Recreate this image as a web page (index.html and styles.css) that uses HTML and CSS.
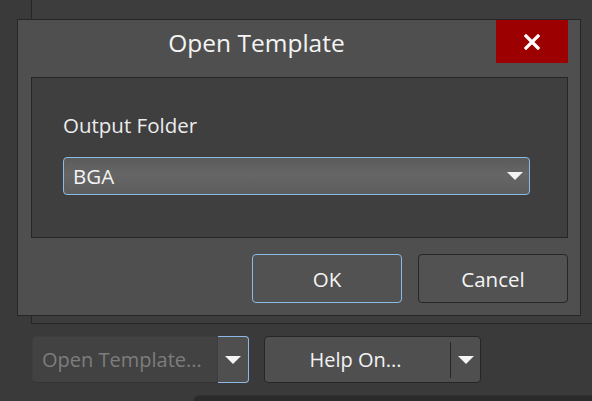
FILE: index.html
```html
<!DOCTYPE html>
<html>
<head>
<meta charset="utf-8">
<link rel="stylesheet" href="styles.css">
</head>
<body>
<div class="screen">
  <div class="bg-panel"></div>
  <div class="bottom-row">
    <div class="split disabled">
      <div class="split-main">Open Template...</div>
      <div class="split-arrow focus"><span class="tri"></span></div>
    </div>
    <div class="split help">
      <div class="split-main">Help On...</div>
      <div class="sep"></div>
      <div class="split-arrow"><span class="tri"></span></div>
    </div>
  </div>
  <div class="dark-box"></div>

  <div class="dialog">
    <div class="titlebar">
      <div class="title">Open Template</div>
      <div class="close">
        <svg width="16" height="16" viewBox="0 0 16 16"><path d="M2 2 L14 14 M14 2 L2 14" stroke="#ffffff" stroke-width="3.2" stroke-linecap="square" fill="none"/></svg>
      </div>
    </div>
    <div class="group">
      <div class="label">Output Folder</div>
      <div class="combo">
        <span class="combo-text">BGA</span>
        <span class="tri"></span>
      </div>
    </div>
    <div class="actions">
      <div class="btn primary">OK</div>
      <div class="btn">Cancel</div>
    </div>
  </div>
</div>
</body>
</html>
```

FILE: styles.css
```css
* { box-sizing: border-box; }
html, body {
  margin: 0;
  padding: 0;
  background: #3a3a3a;
  font-family: "Open Sans", "Noto Sans", sans-serif;
}
.screen {
  position: relative;
  width: 592px;
  height: 401px;
  overflow: hidden;
  background: #3a3a3a;
}
.bg-panel {
  margin-left: 31px;
  height: 324px;
  border-left: 1px solid #262626;
  border-bottom: 1px solid #262626;
  background: #3d3d3d;
}
.bottom-row {
  display: flex;
  gap: 15px;
  padding-left: 32px;
  margin-top: 12px;
  height: 47px;
}
.split {
  display: flex;
  align-items: stretch;
  height: 47px;
  font-size: 20px;
}
.split.disabled { width: 217px; }
.split.disabled .split-main {
  width: 186px;
  background: #424242;
  border: 1px solid #3e3e3e;
  border-bottom-color: #343434;
  border-radius: 4px 0 0 4px;
  color: #7d7d7d;
  display: flex;
  align-items: center;
  padding-left: 9px;
  white-space: nowrap;
}
.split-arrow {
  width: 31px;
  display: flex;
  align-items: center;
  justify-content: center;
  background: #4f4f4f;
}
.split-arrow.focus {
  border: 1px solid #8db9e6;
  border-left: none;
  border-radius: 0 4px 4px 0;
}
.split.help {
  width: 217px;
  background: #4f4f4f;
  border: 1px solid #262626;
  border-radius: 4px;
  color: #f2f2f2;
}
.split.help .split-main {
  flex: 1;
  display: flex;
  align-items: center;
  justify-content: center;
  white-space: nowrap;
  padding-right: 4px;
}
.split.help .sep {
  width: 1px;
  background: #262626;
  margin: 5px 0 4px;
}
.split.help .split-arrow {
  width: 29px;
  background: transparent;
}
.tri {
  display: block;
  width: 0;
  height: 0;
  border-left: 8px solid transparent;
  border-right: 8px solid transparent;
  border-top: 8px solid #f4f4f4;
}
.dark-box {
  margin-left: 193px;
  margin-top: 12px;
  height: 20px;
  background: #2b2b2b;
  border-top: 1px solid #333333;
  border-left: 1px solid #333333;
  border-top-left-radius: 6px;
}

.dialog {
  position: absolute;
  left: 17px;
  top: 19px;
  width: 564px;
  height: 297px;
  background: #4f4f4f;
  border: 1px solid #262626;
  display: flex;
  flex-direction: column;
  padding: 0 12px 0 13px;
}
.titlebar {
  display: flex;
  height: 43px;
}
.title {
  flex: 1;
  display: flex;
  align-items: center;
  justify-content: center;
  color: #f4f4f4;
  font-size: 24.5px;
  padding-right: 14px;
  padding-top: 2px;
}
.close {
  width: 72px;
  background: #9c0000;
  display: flex;
  align-items: center;
  justify-content: center;
}
.close svg { display: block; }
.group {
  margin-top: 14px;
  height: 161px;
  background: #3f3f3f;
  border: 1px solid #262626;
  padding: 35px 37px 0 31px;
}
.label {
  color: #ececec;
  font-size: 20.5px;
  line-height: 24px;
  height: 24px;
}
.combo {
  margin-top: 20px;
  height: 38px;
  border: 1px solid #8db9e6;
  border-radius: 4px;
  background: linear-gradient(to bottom, #5b5b5b 0%, #666666 45%, #5d5d5d 100%);
  display: flex;
  align-items: center;
  justify-content: space-between;
  padding: 0 6px 0 9px;
  color: #f4f4f4;
  font-size: 20.5px;
}
.actions {
  display: flex;
  justify-content: flex-end;
  gap: 16px;
  margin-top: 16px;
}
.btn {
  width: 150px;
  height: 49px;
  background: #525252;
  border: 1px solid #262626;
  border-radius: 4px;
  display: flex;
  align-items: center;
  justify-content: center;
  color: #f4f4f4;
  font-size: 20.5px;
}
.btn.primary {
  border-color: #8db9e6;
}
```
